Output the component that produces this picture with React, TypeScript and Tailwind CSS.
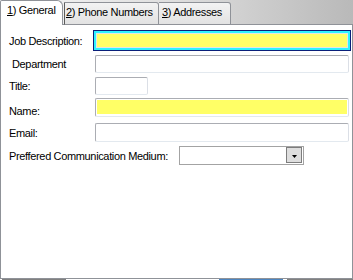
const field =
  "rounded-[2px] border border-[#abadb3] border-r-[#dbdfe6] border-b-[#e3e9ef] bg-white";

function TabLabel({ k, rest }: { k: string; rest: string }) {
  return (
    <span className="whitespace-nowrap">
      <span className="underline underline-offset-[1px]">{k}</span>
      {rest}
    </span>
  );
}

export default function App() {
  return (
    <div className="flex h-[280px] w-[353px] flex-col bg-white font-['Liberation_Sans',Arial,sans-serif] text-[11px] leading-[12px] tracking-[-0.35px] text-black">
      {/* tab strip */}
      <div className="flex h-[25px] items-end bg-gradient-to-r from-[#f7f7f7] via-[#dedede] to-[#b9b9b9]">
        <div className="h-[25px] w-[63px] rounded-tl-[2px] rounded-tr-[6px] border border-b-0 border-[#8f9298] bg-white pl-[6px] pt-[3px]">
          <TabLabel k="1" rest=") General" />
        </div>
        <div className="h-px w-px bg-[#8f9298]" />
        <div className="h-[23px] w-[95px] rounded-tr-[3px] border border-[#8f9298] border-l-[#5c5c5c] bg-gradient-to-b from-[#f3f3f3] to-[#e2e2e2] pl-[1px] pt-[3px]">
          <TabLabel k="2" rest=") Phone Numbers" />
        </div>
        <div className="h-[23px] w-[72px] rounded-tr-[3px] border border-l-0 border-[#8f9298] bg-gradient-to-b from-[#f3f3f3] to-[#e2e2e2] pl-[3px] pt-[3px]">
          <TabLabel k="3" rest=") Addresses" />
        </div>
        <div className="h-px flex-1 bg-[#8f9298]" />
      </div>

      {/* panel */}
      <div className="flex h-[254px] flex-col border border-t-0 border-[#8f9298]">
        <div className="mt-[5px] flex h-[21px] items-center">
          <div className="w-[92px] pl-[8px]">Job Description:</div>
          <div className="h-[21px] w-[258px] border border-[#0a1f7a] bg-[#2ef2ff] p-[2px]">
            <div className="h-full w-full border border-[#e4e4e4] bg-[#ffff66]" />
          </div>
        </div>

        <div className="mt-[4px] flex h-[18px] items-center">
          <div className="w-[94px] pl-[11px]">Department</div>
          <div className={`h-[18px] w-[254px] ${field}`} />
        </div>

        <div className="mt-[4px] flex h-[18px] items-center">
          <div className="w-[94px] pl-[8px]">Title:</div>
          <div className={`h-[18px] w-[53px] ${field}`} />
        </div>

        <div className="mt-[3px] flex h-[19px] items-center">
          <div className="mt-[7px] w-[94px] pl-[8px]">Name:</div>
          <div className={`h-[19px] w-[254px] ${field} pb-[2px] pl-px pr-px pt-px`}>
            <div className="h-full w-full bg-[#ffff66]" />
          </div>
        </div>

        <div className="mt-[6px] flex h-[19px] items-center">
          <div className="w-[94px] pl-[8px]">Email:</div>
          <div className={`h-[19px] w-[254px] ${field}`} />
        </div>

        <div className="mt-[4px] flex h-[19px] items-center">
          <div className="w-[178px] pl-[8px] whitespace-nowrap">Preffered Communication Medium:</div>
          <div className="flex h-[19px] w-[125px] items-start justify-end border border-[#a3a3a3] bg-white pr-px">
            <div className="flex h-[16px] w-[16px] items-center justify-center border border-[#7d7d7d] bg-[#dedede] pt-[3px]">
              <svg width="5" height="3" viewBox="0 0 5 3">
                <polygon points="0,0 5,0 2.5,3" fill="#000" />
              </svg>
            </div>
          </div>
        </div>
      </div>

      {/* edge of the next control below */}
      <div className="flex h-px">
        <div className="w-[2px]" />
        <div className="w-[64px] bg-[#808080]" />
        <div className="w-[153px]" />
        <div className="w-[64px] bg-[#4b84bf]" />
        <div className="w-[4px]" />
        <div className="flex-1 bg-[#808080]" />
      </div>
    </div>
  );
}
